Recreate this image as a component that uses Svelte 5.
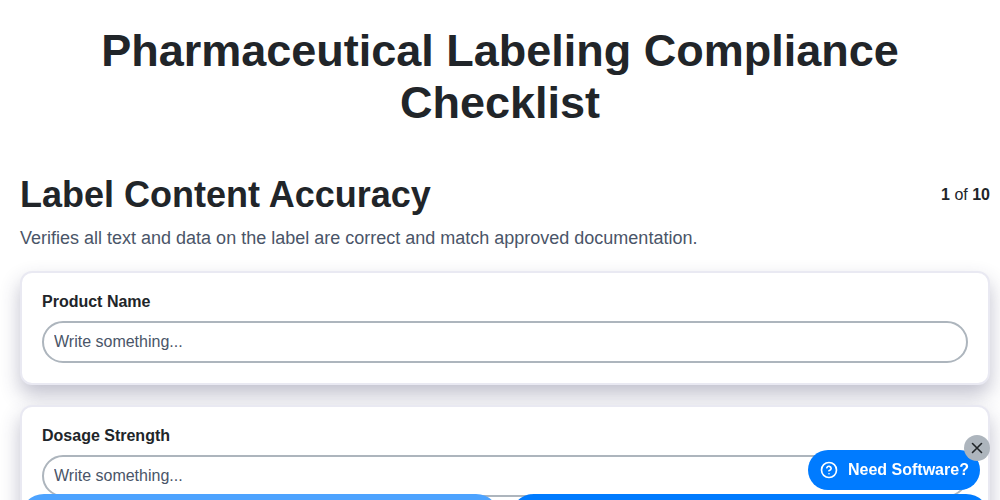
<script>
    const fields = ['Product Name', 'Dosage Strength'];
</script>

<main class="page">
    <h1>Pharmaceutical Labeling Compliance Checklist</h1>

    <div class="section-head">
        <h2>Label Content Accuracy</h2>
        <span class="count"><strong>1</strong> of <strong>10</strong></span>
    </div>
    <p class="desc">Verifies all text and data on the label are correct and match approved documentation.</p>

    {#each fields as field}
        <div class="card">
            <label for={field}>{field}</label>
            <input id={field} type="text" placeholder="Write something..." />
        </div>
    {/each}
</main>

<div class="actions">
    <button class="prev" aria-label="Previous"></button>
    <button class="next" aria-label="Next"></button>
</div>

<div class="promo">
    <button class="need">
        <svg width="18" height="18" viewBox="0 0 24 24" fill="none" stroke="currentColor" stroke-width="2.2" stroke-linecap="round" stroke-linejoin="round">
            <circle cx="12" cy="12" r="10"></circle>
            <path d="M9.1 9a3 3 0 0 1 5.8 1c0 2-3 3-3 3"></path>
            <path d="M12 17h.01"></path>
        </svg>
        Need Software?
    </button>
    <button class="close" aria-label="Close">
        <svg width="12" height="12" viewBox="0 0 12 12" fill="none" stroke="currentColor" stroke-width="1.6" stroke-linecap="round">
            <path d="M1.5 1.5l9 9M10.5 1.5l-9 9"></path>
        </svg>
    </button>
</div>

<style>
    :global(body) {
        font-family: "Liberation Sans", Arial, sans-serif;
        color: #212529;
        background: #fff;
        overflow: hidden;
    }
    .page {
        padding: 25px 10px 80px 20px;
        height: 500px;
        box-sizing: border-box;
        overflow: hidden;
    }
    h1 {
        margin: 0 0 44px;
        font-size: 45px;
        line-height: 52px;
        text-align: center;
        width: 960px;
    }
    .section-head {
        display: flex;
        justify-content: space-between;
        align-items: center;
    }
    h2 {
        margin: 0;
        font-size: 36px;
        line-height: 44px;
    }
    .count {
        font-size: 16px;
    }
    .desc {
        margin: 9px 0 21px;
        font-size: 18px;
        line-height: 24px;
        color: #4a5568;
    }
    .card {
        border: 2px solid #e9e9f2;
        border-radius: 12px;
        padding: 19px 20px 20px;
        margin-bottom: 20px;
        box-shadow: 0 10px 20px rgba(50, 50, 93, 0.3);
        background: #fff;
    }
    label {
        display: block;
        font-size: 16px;
        font-weight: 700;
        line-height: 20px;
        margin-bottom: 9px;
    }
    input {
        display: block;
        width: 100%;
        box-sizing: border-box;
        height: 42px;
        border: 2px solid #adb5bd;
        border-radius: 21px;
        padding: 0 10px;
        font: 16px "Liberation Sans", Arial, sans-serif;
        background: #fff;
    }
    input::placeholder {
        color: #4a5568;
        opacity: 1;
    }
    .actions {
        position: fixed;
        left: 20px;
        right: 10px;
        top: 494px;
        display: flex;
        gap: 10px;
    }
    .actions button {
        flex: 1;
        height: 48px;
        border: none;
        border-radius: 24px;
    }
    .prev {
        background: #4da3ff;
    }
    .next {
        background: #007bff;
    }
    .promo {
        position: fixed;
        left: 808px;
        top: 450px;
    }
    .need {
        display: flex;
        align-items: center;
        gap: 10px;
        height: 40px;
        width: 172px;
        padding: 0 0 0 12px;
        border: none;
        border-radius: 20px;
        background: #007bff;
        color: #fff;
        font: 700 16px "Liberation Sans", Arial, sans-serif;
        white-space: nowrap;
    }
    .close {
        position: absolute;
        left: 156px;
        top: -15px;
        width: 26px;
        height: 26px;
        padding: 0;
        display: flex;
        align-items: center;
        justify-content: center;
        border: none;
        border-radius: 50%;
        background: #adb5bd;
        color: #212529;
    }
</style>
